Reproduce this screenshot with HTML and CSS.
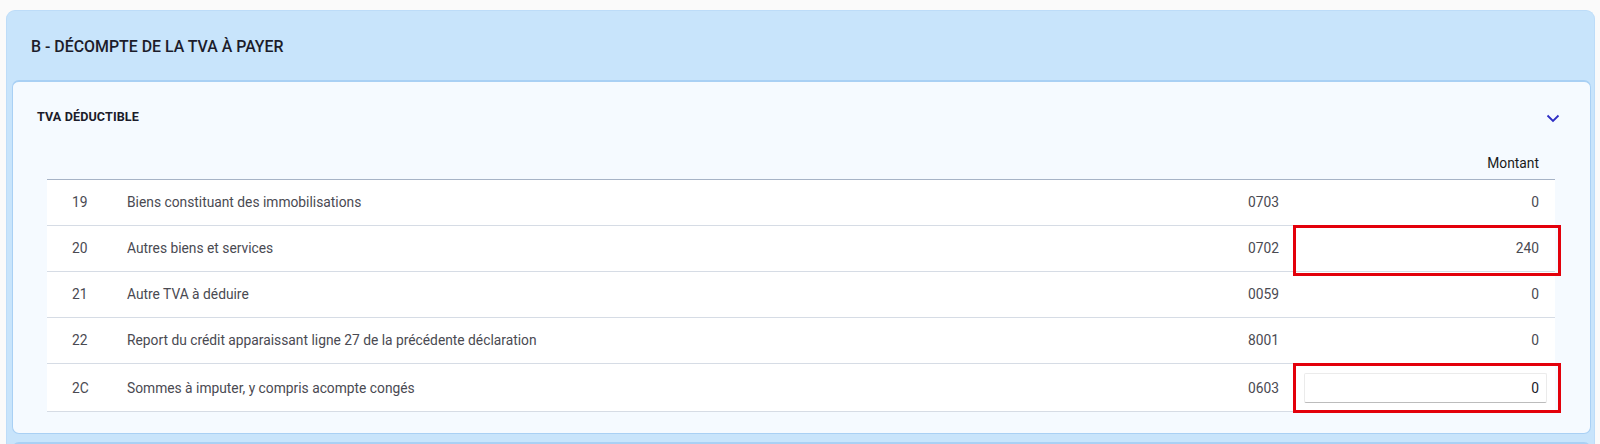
FILE: index.html
```html
<!DOCTYPE html>
<html lang="fr">
<head>
<meta charset="utf-8">
<title>Décompte de la TVA</title>
<link rel="stylesheet" href="styles.css">
</head>
<body>
<section class="section">
  <header class="section-head">B - DÉCOMPTE DE LA TVA À PAYER</header>
  <div class="panel">
    <div class="panel-head">
      <span class="panel-title">TVA DÉDUCTIBLE</span>
      <svg class="chev" width="14" height="9" viewBox="0 0 14 9"><path d="M1.5 1.5 L7 7 L12.5 1.5" fill="none" stroke="#2d2dc4" stroke-width="1.8"/></svg>
    </div>
    <div class="table">
      <div class="thead">
        <span></span><span></span><span></span><span class="th-amount">Montant</span>
      </div>
      <div class="row">
        <span class="num">19</span><span class="desc">Biens constituant des immobilisations</span><span class="code">0703</span><span class="amount">0</span>
      </div>
      <div class="row">
        <span class="num">20</span><span class="desc">Autres biens et services</span><span class="code">0702</span><span class="amount marked mark-tall">240</span>
      </div>
      <div class="row">
        <span class="num">21</span><span class="desc">Autre TVA à déduire</span><span class="code">0059</span><span class="amount">0</span>
      </div>
      <div class="row">
        <span class="num">22</span><span class="desc">Report du crédit apparaissant ligne 27 de la précédente déclaration</span><span class="code">8001</span><span class="amount">0</span>
      </div>
      <div class="row row-last">
        <span class="num">2C</span><span class="desc">Sommes à imputer, y compris acompte congés</span><span class="code">0603</span><span class="amount marked input-cell"><input class="field" type="text" value="0"></span>
      </div>
    </div>
  </div>
  <div class="panel panel-next"></div>
</section>
</body>
</html>
```
FILE: styles.css
```css
* { box-sizing: border-box; }
html, body { margin: 0; }
body {
  background: #fafafa;
  padding: 10px 5px 0 6px;
  font-family: Roboto, "Noto Sans", sans-serif;
  overflow: hidden;
  height: 444px;
}
.section {
  background: #c8e4fb;
  border: 1px solid #bddcf8;
  border-bottom: none;
  border-radius: 9px 9px 0 0;
  padding: 0 3px 0 5px;
  height: 500px;
}
.section-head {
  height: 69px;
  display: flex;
  align-items: center;
  padding-left: 19px;
  padding-top: 2px;
  font-size: 15.9px;
  font-weight: 500;
  color: #1c1c2a;
}
.panel {
  background: #f5faff;
  border: 1px solid #a9d0f4;
  border-top-width: 2px;
  border-radius: 7px;
  padding: 0 35px 21px 34px;
}
.panel-next {
  margin-top: 8px;
  height: 60px;
}
.panel-head {
  height: 69px;
  display: flex;
  align-items: center;
  justify-content: space-between;
  margin-left: -10px;
}
.panel-title {
  font-size: 12.6px;
  font-weight: 700;
  color: #1c1c2a;
  letter-spacing: 0.1px;
}
.chev { margin-right: -5px; margin-top: 3px; }
.table {
  display: flex;
  flex-direction: column;
}
.thead, .row {
  display: grid;
  grid-template-columns: 80px 1fr auto 262px;
  align-items: center;
}
.thead {
  height: 29px;
  border-bottom: 1px solid #a6b3c6;
  padding-bottom: 5px;
}
.th-amount {
  text-align: right;
  padding-right: 16px;
  font-size: 13.8px;
  color: #1a1a1a;
}
.row {
  height: 46px;
  background: #fff;
  border-bottom: 1px solid #d6dce5;
  font-size: 13.8px;
  color: #4a4a52;
  padding-bottom: 2px;
}
.row-last { height: 48px; padding-bottom: 0; }
.num { padding-left: 25px; }
.code { padding-right: 14px; }
.amount {
  text-align: right;
  padding-right: 16px;
  position: relative;
  align-self: stretch;
  display: flex;
  align-items: center;
  justify-content: flex-end;
}
.marked::after {
  content: "";
  position: absolute;
  left: 0;
  right: -6px;
  top: -1px;
  bottom: -2px;
  border: 3px solid #e3000b;
  pointer-events: none;
}
.mark-tall::after { bottom: -7px; }
.input-cell { padding: 0 8px 0 11px; }
.field {
  width: 100%;
  height: 30px;
  border: 1px solid #ebebeb;
  border-bottom: 1px solid #bcbcbc;
  border-radius: 2px;
  background: #fff;
  text-align: right;
  padding: 0 7px 0 0;
  font-family: Roboto, "Noto Sans", sans-serif;
  font-size: 13.8px;
  color: #1a1a2a;
  outline: none;
}
```
